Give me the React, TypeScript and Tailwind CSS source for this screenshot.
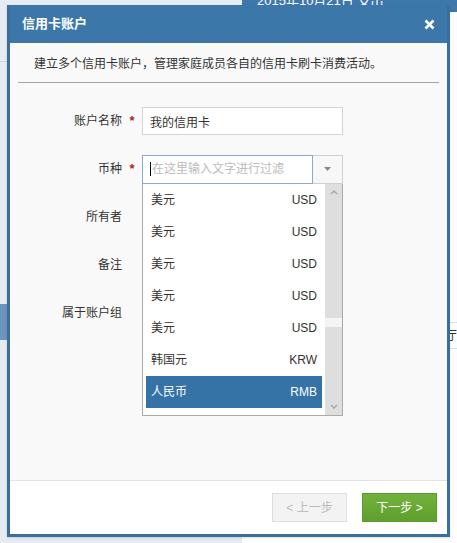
import { useState } from 'react';

const currencies = [
  { name: '美元', code: 'USD' },
  { name: '美元', code: 'USD' },
  { name: '美元', code: 'USD' },
  { name: '美元', code: 'USD' },
  { name: '美元', code: 'USD' },
  { name: '韩国元', code: 'KRW' },
  { name: '人民币', code: 'RMB' },
];

const font = { fontFamily: '"Liberation Sans", "Noto Sans CJK SC", sans-serif' };

const Backdrop = () => {
  return (
    <div className="flex h-[543px] w-[457px]">
      <div className="flex w-[247px] flex-col bg-[#e6ecf2]">
        <div className="h-[62px] border-b border-[#cfd8e2]" />
        <div className="mt-[242px] h-[36px] w-[8px] bg-[#6b95bf]" />
      </div>
      <div className="flex flex-1 flex-col bg-white">
        <div className="h-[12px] overflow-hidden bg-[#3e78ab] pl-[15px] text-[13px] leading-[13px] text-white">
          <div className="-mt-[6px]">2015年10月21日 支出</div>
        </div>
        <div className="mt-[310px] h-[27px] border-y border-[#dcdcdc] pl-[203px] text-[12px] leading-[26px] text-[#333]">
          厅
        </div>
      </div>
    </div>
  );
};

const CurrencyDropdown = () => {
  return (
    <div className="absolute left-0 top-full z-10 flex h-[232px] w-[201px] border border-t-0 border-[#aaa] bg-white">
      <div className="flex flex-1 flex-col pl-[3px] pr-[3px]">
        {currencies.map((c, i) => (
          <div
            key={i}
            className={
              i === currencies.length - 1
                ? 'flex h-[32px] items-center justify-between bg-[#3572a6] px-[5px] text-white'
                : 'flex h-[32px] items-center justify-between px-[5px] text-[#333]'
            }
          >
            <span className="text-[12px]">{c.name}</span>
            <span className="text-[12px]">{c.code}</span>
          </div>
        ))}
      </div>
      <div className="flex w-[17px] flex-col bg-[#dedede]">
        <div className="flex h-[17px] items-center justify-center text-[#999]">
          <svg width="8" height="5" viewBox="0 0 8 5">
            <path d="M1 4 L4 1 L7 4" stroke="#aaa" strokeWidth="1.5" fill="none" />
          </svg>
        </div>
        <div className="mt-[117px] h-[9px] bg-[#f4f4f4]" />
        <div className="flex-1" />
        <div className="flex h-[17px] items-center justify-center">
          <svg width="8" height="5" viewBox="0 0 8 5">
            <path d="M1 1 L4 4 L7 1" stroke="#aaa" strokeWidth="1.5" fill="none" />
          </svg>
        </div>
      </div>
    </div>
  );
};

const FormRow = ({ label, required, children }: { label: string; required?: boolean; children?: React.ReactNode }) => {
  return (
    <div className="flex h-[48px] items-center">
      <div className="w-[112px] text-right text-[12px] text-[#333]">{label}</div>
      <div className="w-[20px] text-center text-[13px] font-bold text-[#b52020]">{required ? '*' : ''}</div>
      {children}
    </div>
  );
};

const App = () => {
  const [name, setName] = useState('我的信用卡');

  return (
    <div className="relative h-[543px] w-[457px] overflow-hidden" style={font}>
      <Backdrop />
      <div className="absolute left-[7px] top-[5px] flex h-[532px] w-[443px] flex-col border-[3px] border-t-0 border-[#3a6e9d] bg-white shadow">
        <div className="flex h-[38px] items-center justify-between bg-[#3b77a9] pl-[12px] pr-[12px] text-white">
          <span className="text-[13px] font-bold">信用卡账户</span>
          <svg width="11" height="11" viewBox="0 0 11 11">
            <path d="M1.5 1.5 L9.5 9.5 M9.5 1.5 L1.5 9.5" stroke="white" strokeWidth="2.6" />
          </svg>
        </div>
        <div className="flex flex-1 flex-col bg-[#f9f9f9] px-[8px]">
          <div className="border-b border-[#a5a5a5] pb-[9px] pl-[16px] pt-[12px] text-[12px] text-[#333]">
            建立多个信用卡账户，管理家庭成员各自的信用卡刷卡消费活动。
          </div>
          <div className="mt-[14px] -ml-[8px] flex flex-col">
            <FormRow label="账户名称" required>
              <input
                value={name}
                onChange={(e) => setName(e.target.value)}
                className="h-[28px] w-[201px] border border-[#d3d3d3] bg-white px-[7px] text-[12px] text-[#333] outline-none"
              />
            </FormRow>
            <FormRow label="币种" required>
              <div className="relative flex h-[29px] w-[201px]">
                <div className="flex flex-1 items-center border border-[#8ea9c4] bg-white pl-[7px] text-[12px] text-[#bbb]">
                  <span className="mr-[1px] h-[14px] w-[1px] bg-black" />
                  在这里输入文字进行过滤
                </div>
                <div className="flex w-[30px] items-center justify-center border border-l-0 border-[#d0d0d0] bg-[#f7f7f7]">
                  <svg width="7" height="4" viewBox="0 0 7 4">
                    <path d="M0 0 L7 0 L3.5 4 Z" fill="#888" />
                  </svg>
                </div>
                <CurrencyDropdown />
              </div>
            </FormRow>
            <FormRow label="所有者" />
            <FormRow label="备注" />
            <FormRow label="属于账户组" />
          </div>
        </div>
        <div className="flex h-[54px] items-center justify-end gap-[15px] border-t border-[#e2e2e2] bg-white pr-[10px]">
          <button className="h-[29px] w-[75px] border border-[#dedede] bg-[#f3f3f3] text-[12px] text-[#bdbdbd]">
            &lt; 上一步
          </button>
          <button className="h-[29px] w-[75px] border border-[#5b9a2c] bg-gradient-to-b from-[#72b23c] to-[#5e9f2d] text-[12px] text-white">
            下一步 &gt;
          </button>
        </div>
      </div>
    </div>
  );
};

export default App;
